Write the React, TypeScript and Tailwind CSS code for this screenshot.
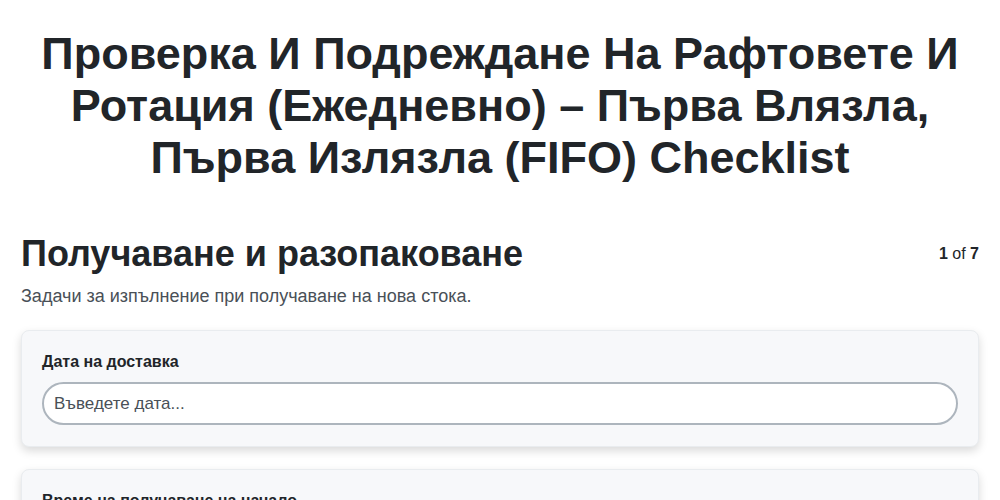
import React from 'react'

const fields = [
    { label: 'Дата на доставка', placeholder: 'Въведете дата...' },
    { label: 'Време на получаване на начало', placeholder: 'Въведете време...' },
]

export default function App() {
    return (
        <div className="min-h-screen bg-white px-[21px] pt-[28px] pb-10 text-[#212529]" style={{ fontFamily: '"Liberation Sans", Arial, sans-serif' }}>
            <h1 className="mx-auto max-w-[958px] text-center text-[45px] font-bold leading-[52px]">
                Проверка И Подреждане На Рафтовете И Ротация (Ежедневно) – Първа Влязла, Първа Излязла (FIFO) Checklist
            </h1>

            <div className="mt-[48px] flex items-center justify-between">
                <h2 className="text-[36px] font-bold leading-[43px]">Получаване и разопаковане</h2>
                <div className="text-[16px]">
                    <span className="font-bold">1</span> of <span className="font-bold">7</span>
                </div>
            </div>
            <p className="mt-[8px] text-[18px] leading-[27px] text-[#495057]">Задачи за изпълнение при получаване на нова стока.</p>

            <div className="mt-[20px] flex flex-col gap-[22px]">
                {fields.map((f) => (
                    <div key={f.label} className="rounded-lg border border-[#e9ecef] bg-[#f7f8fa] px-5 pt-[19px] pb-[21px] shadow-[0_4px_10px_rgba(0,0,0,0.15)]">
                        <label className="mb-[8px] block text-[16px] font-bold leading-6">{f.label}</label>
                        <input
                            type="text"
                            placeholder={f.placeholder}
                            className="block h-[43px] w-full rounded-full border-2 border-[#adb5bd] bg-white px-[10px] text-[17px] text-[#212529] outline-none placeholder:text-[#495057]"
                        />
                    </div>
                ))}
            </div>
        </div>
    )
}
